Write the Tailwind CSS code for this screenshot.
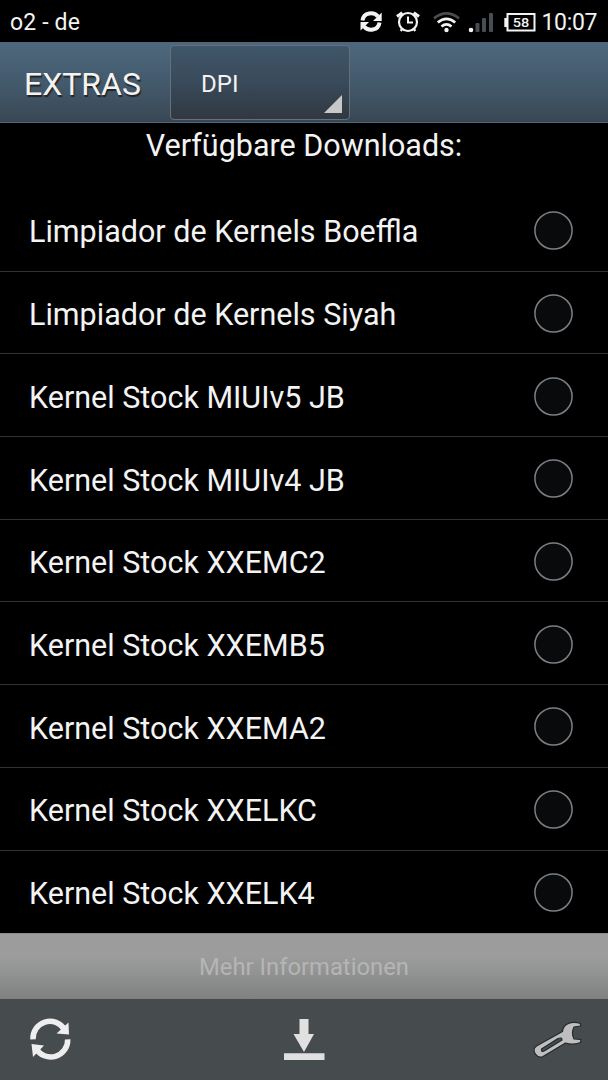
<!DOCTYPE html>
<html lang="de">
<head>
  <meta charset="UTF-8" />
  <meta name="viewport" content="width=device-width, initial-scale=1.0"/>
  <title>Extras</title>
  <script src="https://cdn.jsdelivr.net/npm/@tailwindcss/browser@4"></script>
</head>
<body class="bg-black text-[#f3f3f3] font-[Roboto,sans-serif] w-[608px] h-[1080px] overflow-hidden flex flex-col">

  <!-- Status bar -->
  <div class="h-[42px] shrink-0 flex items-center px-[10px] text-[23px]">
    <span class="flex-1 pt-1 tracking-[0.15px]">o2 - de</span>
    <svg class="w-[248px] h-[42px] shrink-0" viewBox="350 0 248 42">
      <!-- sync -->
      <g fill="none" stroke="#f3f3f3" stroke-width="4">
        <path d="M362.5 20.5C363.5 12 374 11.5 378 16.5"/>
        <path d="M379.5 22.5C378.5 31 368 31.5 364 26.5"/>
      </g>
      <path fill="#f3f3f3" d="M381.7 12.5V21H373zM360.5 30.5V22H369z"/>
      <!-- alarm -->
      <g fill="none" stroke="#f3f3f3">
        <circle cx="408" cy="22" r="9" stroke-width="2.2"/>
        <path stroke-width="2" d="M408 16.5V22.5H413"/>
        <path stroke-width="3.2" d="M397 16.5L402.3 12.8M419 16.5L413.7 12.8"/>
        <path stroke-width="2.2" d="M402.5 28.5L400.7 31M413.5 28.5L415.3 31"/>
      </g>
      <!-- wifi -->
      <g fill="none" stroke-width="2.8">
        <path stroke="#474d52" d="M434 18.3Q446.5 8.5 459 18.3"/>
        <path stroke="#f3f3f3" d="M437.8 22.5Q446.5 15.3 455.2 22.5"/>
        <path stroke="#f3f3f3" d="M441.5 26.5Q446.5 22.3 451.5 26.5"/>
      </g>
      <circle cx="446.5" cy="30" r="2.2" fill="#f3f3f3"/>
      <!-- signal -->
      <circle cx="471" cy="30" r="2.3" fill="#f3f3f3"/>
      <g fill="#474d52">
        <rect x="475.5" y="23" width="4" height="9" rx="1"/>
        <rect x="482" y="18" width="4" height="14" rx="1"/>
        <rect x="489" y="13" width="4" height="19" rx="1"/>
      </g>
      <!-- battery -->
      <rect x="507.5" y="14" width="27" height="16.5" fill="none" stroke="#f3f3f3" stroke-width="2"/>
      <rect x="504.3" y="18" width="3" height="9" fill="#f3f3f3"/>
      <text x="521" y="26.8" text-anchor="middle" textLength="16.5" lengthAdjust="spacingAndGlyphs" font-family="Roboto" font-size="13" font-weight="500" fill="#f3f3f3">58</text>
      <text x="541.5" y="30" font-family="Roboto" font-size="23" textLength="56" lengthAdjust="spacing" fill="#f3f3f3">10:07</text>
    </svg>
  </div>

  <!-- Title bar -->
  <header class="h-[81px] shrink-0 flex items-start pl-6 border-t border-b border-[#49667d] bg-linear-to-b from-[#4f687d] via-[#435a6d] to-[#394754]">
    <h1 class="w-[146px] leading-[80px] text-[32px] pt-px [text-shadow:1px_2px_1px_#222]">EXTRAS</h1>
    <div class="relative w-[180px] h-[75px] mt-[2px] pl-[30px] rounded-[4px] border-[1.5px] border-[#65717a] bg-linear-to-b from-[#40566a] via-[#394a5a] to-[#303840] text-[24px] leading-[77px]">
      DPI
      <svg class="absolute right-[7px] bottom-[6px] w-[18px] h-[18px]" viewBox="0 0 18 18"><path d="M18 0V18H0z" fill="#c8c8c8"/></svg>
    </div>
  </header>

  <!-- Downloads -->
  <h2 class="h-[66px] shrink-0 text-center text-[30.5px] leading-[46px]">Verfügbare Downloads:</h2>
  <ul id="downloads" class="h-[744px] shrink-0 grid auto-rows-[82.7px] text-[30.5px]"></ul>

  <!-- More info -->
  <button class="h-[66px] shrink-0 text-[23.8px] pt-[2px] text-[#b5b5b5] border-t border-[#8a8a8a] bg-linear-to-b from-[#9c9c9c] from-35% via-[#8f9190] via-65% to-[#808080]">Mehr Informationen</button>

  <!-- Bottom bar -->
  <footer class="flex-1 bg-[#464b4e] flex items-start justify-between">
    <svg class="w-[100px] h-[81px]" viewBox="0 999 100 81">
      <g fill="none" stroke="#eeeeee" stroke-width="5.5">
        <path d="M33 1039.3A17 17 0 0 1 64.5 1029.5"/>
        <path d="M67.7 1039.3A17 17 0 0 1 36 1048.5"/>
      </g>
      <path fill="#eeeeee" d="M68.5 1022.5L69 1034.5L56.5 1033.5zM31.5 1044L44 1045.5L33 1057z"/>
    </svg>
    <svg class="w-[100px] h-[81px]" viewBox="254 999 100 81">
      <path fill="#e0e0e0" d="M299.5 1019H308.5V1034H314L304 1052L293.5 1034H299.5zM284 1053.3H324.5V1060H284z"/>
    </svg>
    <svg class="w-[100px] h-[81px]" viewBox="508 999 100 81">
      <path fill="#bebebe" stroke="#25292c" stroke-width="1.2" stroke-linejoin="round" fill-rule="evenodd" d="M580.5 1023.5C572 1020.5 563 1023.5 562.5 1031.5L536.5 1046C530.5 1050 537 1059.5 543 1056.5L565.5 1043Q572 1045.5 580.5 1042.5L581 1039.5L574 1039Q571 1033 574 1027L580.5 1026zM541.5 1049L558 1038.5Q562 1037 562 1040L545 1050.5Q541 1053 541.5 1049z"/>
    </svg>
  </footer>

  <script>
    const downloads = [
      "Limpiador de Kernels Boeffla",
      "Limpiador de Kernels Siyah",
      "Kernel Stock MIUIv5 JB",
      "Kernel Stock MIUIv4 JB",
      "Kernel Stock XXEMC2",
      "Kernel Stock XXEMB5",
      "Kernel Stock XXEMA2",
      "Kernel Stock XXELKC",
      "Kernel Stock XXELK4"
    ];

    const list = document.getElementById("downloads");
    downloads.forEach(name => {
      list.innerHTML += `
        <li class="flex items-center justify-between pt-[2px] pl-[29px] pr-[35px] border-b border-[#333] last:border-b-0">
          <span class="pt-[3px]">${name}</span>
          <svg class="w-[39px] h-[39px]" viewBox="0 0 39 39"><circle cx="19.5" cy="19.5" r="18.6" fill="#090a0c" stroke="#7c8084" stroke-width="1.5"/></svg>
        </li>
      `;
    });
  </script>
</body>
</html>
